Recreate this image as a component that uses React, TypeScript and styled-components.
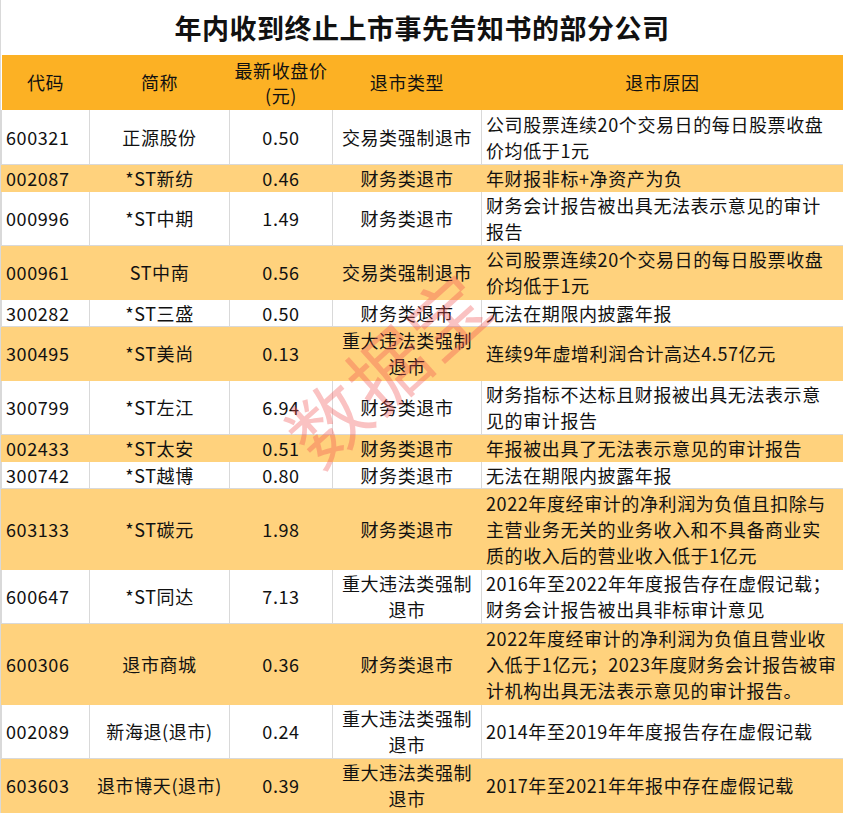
import React from 'react';
import styled, { createGlobalStyle } from 'styled-components';

const Global = createGlobalStyle`
  body { margin: 0; background: #fff; font-family: "Noto Sans CJK SC", "Noto Sans", sans-serif; }
`;

const Wrap = styled.div`
  position: relative;
  width: 843px;
  height: 813px;
  overflow: hidden;
  border-left: 1px solid #d9d9d9;
  box-sizing: border-box;
`;

const Title = styled.div`
  height: 55px;
  display: flex;
  align-items: center;
  justify-content: center;
  font-size: 27px;
  font-weight: 700;
  color: #111;
  letter-spacing: 0.5px;
`;

const Table = styled.table`
  border-collapse: collapse;
  table-layout: fixed;
  width: 843px;
  font-size: 18px;
  letter-spacing: 0.6px;
  color: #111;
  line-height: 26px;
`;

const Th = styled.th`
  background: #fcb124;
  font-weight: 400;
  height: 55px;
  padding: 0;
  line-height: 25px;
`;

const Row = styled.tr<{ $alt: boolean; $lines: number }>`
  height: ${p => p.$lines * 27}px;
  background: ${p => (p.$alt ? '#ffd27d' : '#fff')};
`;

const Td = styled.td<{ $align?: string }>`
  border: 1px solid #d9d9d9;
  border-top: none;
  padding: 0 4px;
  text-align: ${p => p.$align || 'center'};
  vertical-align: middle;
  ${Row}:nth-child(even) & { border-color: #ffd27d; }
`;

const Mark = styled.div`
  position: absolute;
  left: 265px;
  top: 310px;
  font-size: 78px;
  color: rgba(240, 80, 80, 0.35);
  transform: rotate(-42deg);
  letter-spacing: 2px;
  pointer-events: none;
`;

const rows: [string, string, string, string, string, number][] = [
  ['600321', '正源股份', '0.50', '交易类强制退市', '公司股票连续20个交易日的每日股票收盘价均低于1元', 2],
  ['002087', '*ST新纺', '0.46', '财务类退市', '年财报非标+净资产为负', 1],
  ['000996', '*ST中期', '1.49', '财务类退市', '财务会计报告被出具无法表示意见的审计报告', 2],
  ['000961', 'ST中南', '0.56', '交易类强制退市', '公司股票连续20个交易日的每日股票收盘价均低于1元', 2],
  ['300282', '*ST三盛', '0.50', '财务类退市', '无法在期限内披露年报', 1],
  ['300495', '*ST美尚', '0.13', '重大违法类强制退市', '连续9年虚增利润合计高达4.57亿元', 2],
  ['300799', '*ST左江', '6.94', '财务类退市', '财务指标不达标且财报被出具无法表示意见的审计报告', 2],
  ['002433', '*ST太安', '0.51', '财务类退市', '年报被出具了无法表示意见的审计报告', 1],
  ['300742', '*ST越博', '0.80', '财务类退市', '无法在期限内披露年报', 1],
  ['603133', '*ST碳元', '1.98', '财务类退市', '2022年度经审计的净利润为负值且扣除与主营业务无关的业务收入和不具备商业实质的收入后的营业收入低于1亿元', 3],
  ['600647', '*ST同达', '7.13', '重大违法类强制退市', '2016年至2022年年度报告存在虚假记载；财务会计报告被出具非标审计意见', 2],
  ['600306', '退市商城', '0.36', '财务类退市', '2022年度经审计的净利润为负值且营业收入低于1亿元；2023年度财务会计报告被审计机构出具无法表示意见的审计报告。', 3],
  ['002089', '新海退(退市)', '0.24', '重大违法类强制退市', '2014年至2019年年度报告存在虚假记载', 2],
  ['603603', '退市博天(退市)', '0.39', '重大违法类强制退市', '2017年至2021年年报中存在虚假记载', 2],
];

export default function App() {
  return (
    <Wrap>
      <Global />
      <Title>年内收到终止上市事先告知书的部分公司</Title>
      <Table>
        <colgroup>
          <col style={{ width: 88 }} />
          <col style={{ width: 140 }} />
          <col style={{ width: 103 }} />
          <col style={{ width: 149 }} />
          <col />
        </colgroup>
        <thead>
          <tr>
            <Th>代码</Th>
            <Th>简称</Th>
            <Th>最新收盘价<br />(元)</Th>
            <Th>退市类型</Th>
            <Th>退市原因</Th>
          </tr>
        </thead>
        <tbody>
          {rows.map((r, i) => (
            <Row key={r[0]} $alt={i % 2 === 1} $lines={r[5]}>
              <Td $align="left">{r[0]}</Td>
              <Td>{r[1]}</Td>
              <Td>{r[2]}</Td>
              <Td>{r[3]}</Td>
              <Td $align="left">{r[4]}</Td>
            </Row>
          ))}
        </tbody>
      </Table>
      <Mark>数据宝</Mark>
    </Wrap>
  );
}
